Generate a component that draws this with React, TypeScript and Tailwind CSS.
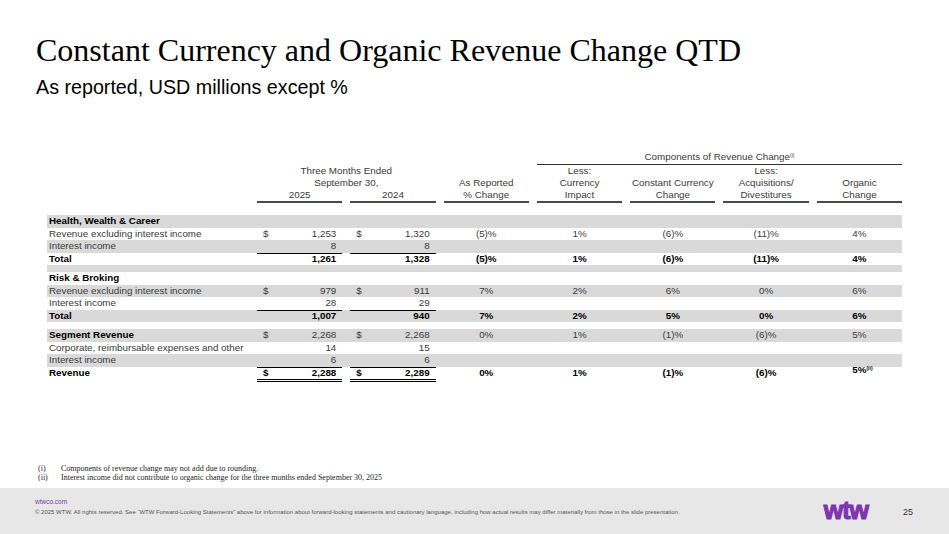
import React from 'react'

const sans = "font-['Liberation_Sans',Arial,sans-serif]"
const serif = "font-['Liberation_Serif','Times_New_Roman',serif]"

type Row = {
  label: string
  labelBold?: boolean
  valBold?: boolean
  a?: string
  b?: string
  dollar?: boolean
  pct?: string[]
  shade: boolean
  underline?: boolean
  double?: boolean
}

const rows: (Row | { spacer: true; shade: boolean })[] = [
  { label: 'Health, Wealth & Career', labelBold: true, shade: true },
  { label: 'Revenue excluding interest income', a: '1,253', b: '1,320', dollar: true, pct: ['(5)%', '1%', '(6)%', '(11)%', '4%'], shade: false },
  { label: 'Interest income', a: '8', b: '8', shade: true, underline: true },
  { label: 'Total', labelBold: true, valBold: true, a: '1,261', b: '1,328', pct: ['(5)%', '1%', '(6)%', '(11)%', '4%'], shade: false },
  { spacer: true, shade: true },
  { label: 'Risk & Broking', labelBold: true, shade: false },
  { label: 'Revenue excluding interest income', a: '979', b: '911', dollar: true, pct: ['7%', '2%', '6%', '0%', '6%'], shade: true },
  { label: 'Interest income', a: '28', b: '29', shade: false, underline: true },
  { label: 'Total', labelBold: true, valBold: true, a: '1,007', b: '940', pct: ['7%', '2%', '5%', '0%', '6%'], shade: true },
  { spacer: true, shade: false },
  { label: 'Segment Revenue', labelBold: true, a: '2,268', b: '2,268', dollar: true, pct: ['0%', '1%', '(1)%', '(6)%', '5%'], shade: true },
  { label: 'Corporate, reimbursable expenses and other', a: '14', b: '15', shade: false },
  { label: 'Interest income', a: '6', b: '6', shade: true, underline: true },
  { label: 'Revenue', labelBold: true, valBold: true, a: '2,288', b: '2,289', dollar: true, pct: ['0%', '1%', '(1)%', '(6)%', '5%'], shade: false, double: true },
]

const grid = 'grid grid-cols-[202px_repeat(7,85.3px)] gap-x-2'

function Money({ v, dollar, bold, underline, double }: { v?: string; dollar?: boolean; bold?: boolean; underline?: boolean; double?: boolean }) {
  return (
    <div
      className={`flex items-center justify-between px-[6px] h-full
        ${bold ? 'font-bold text-black' : 'text-[#3a3a3a]'}
        ${underline ? 'border-b border-black' : ''}
        ${double ? 'border-b-[3px] border-double border-black' : ''}`}
    >
      <span>{dollar ? '$' : ''}</span>
      <span>{v}</span>
    </div>
  )
}

function DataRow({ r }: { r: Row }) {
  const last = r.double
  return (
    <div className={`${grid} h-[12.6px] leading-[12.6px] ${r.shade ? 'bg-[#d9d9d9]' : ''}`}>
      <div className={`pl-[2px] whitespace-nowrap ${r.labelBold ? 'font-bold text-black' : 'text-[#3a3a3a]'}`}>{r.label}</div>
      <Money v={r.a} dollar={r.dollar} bold={r.valBold} underline={r.underline} double={r.double} />
      <Money v={r.b} dollar={r.dollar} bold={r.valBold} underline={r.underline} double={r.double} />
      {(r.pct ?? ['', '', '', '', '']).map((p, i) => (
        <div key={i} className={`text-center ${r.valBold ? 'font-bold text-black' : 'text-[#3a3a3a]'}`}>
          {last && i === 4 ? (
            <span className="relative -top-[3px] left-[3px]">
              {p}
              <span className="relative -top-[3px] text-[5px] font-bold">(ii)</span>
            </span>
          ) : (
            p
          )}
        </div>
      ))}
    </div>
  )
}

function Header() {
  const u = 'border-b-2 border-[#4a4a4a]'
  return (
    <div className="text-[#3a3a3a] leading-[12px]">
      <div className={`${grid} h-[13px]`}>
        <div className="col-start-5 col-span-4 text-center border-b border-[#333]">
          Components of Revenue Change<span className="relative -top-[3px] text-[5px]">(i)</span>
        </div>
      </div>
      <div className={`${grid} h-[12px] mt-[1px]`}>
        <div className="col-start-2 col-span-2 text-center">Three Months Ended</div>
        <div className="col-start-5 text-center">Less:</div>
        <div className="col-start-7 text-center">Less:</div>
      </div>
      <div className={`${grid} h-[12px]`}>
        <div className="col-start-2 col-span-2 text-center">September 30,</div>
        <div className="text-center">As Reported</div>
        <div className="text-center">Currency</div>
        <div className="text-center whitespace-nowrap">Constant Currency</div>
        <div className="text-center">Acquisitions/</div>
        <div className="text-center">Organic</div>
      </div>
      <div className={`${grid} h-[14px]`}>
        <div className={`col-start-2 text-center ${u}`}>2025</div>
        <div className={`text-center ${u}`}>2024</div>
        <div className={`text-center ${u}`}>% Change</div>
        <div className={`text-center ${u}`}>Impact</div>
        <div className={`text-center ${u}`}>Change</div>
        <div className={`text-center ${u}`}>Divestitures</div>
        <div className={`text-center ${u}`}>Change</div>
      </div>
    </div>
  )
}

export default function App() {
  return (
    <div className={`w-[949px] h-[534px] bg-white flex flex-col overflow-hidden ${sans}`}>
      {/* title */}
      <h1 className={`${serif} text-[32px] leading-[32px] text-black pl-[36px] mt-[34px]`}>
        Constant Currency and Organic Revenue Change QTD
      </h1>
      <p className="text-[19.7px] leading-[20px] text-black pl-[36px] mt-[11px]">As reported, USD millions except %</p>

      {/* table */}
      <div className="ml-[47px] w-[855px] mt-[54px] text-[9.8px]">
        <Header />
        <div className="mt-[12px]">
          {rows.map((r, i) =>
            'spacer' in r ? (
              <div key={i} className={`h-[6.6px] ${r.shade ? 'bg-[#d9d9d9]' : ''}`} />
            ) : (
              <DataRow key={i} r={r} />
            )
          )}
        </div>
      </div>

      {/* footnotes */}
      <div className={`${serif} text-[8px] leading-[8.3px] text-[#222] mt-[86px] pl-[38px]`}>
        <div className="flex"><span className="w-[23px]">(i)</span><span>Components of revenue change may not add due to rounding.</span></div>
        <div className="flex"><span className="w-[23px]">(ii)</span><span>Interest income did not contribute to organic change for the three months ended September 30, 2025</span></div>
      </div>

      {/* footer */}
      <footer className="mt-auto h-[46px] bg-[#e7e7e7] flex items-start">
        <div className="pl-[35px] pt-[10px]">
          <div className="text-[6.5px] leading-[8px] text-[#7f35b2]">wtwco.com</div>
          <div className="text-[6px] leading-[8px] text-[#555] mt-[2px] whitespace-nowrap">
            © 2025 WTW. All rights reserved. See “WTW Forward-Looking Statements” above for information about forward-looking statements and cautionary language, including how actual results may differ materially from those in the slide presentation.
          </div>
        </div>
        <span className="ml-auto mt-[13px] text-[25px] leading-[18px] font-bold text-[#7f35b2] tracking-[-1px] [-webkit-text-stroke:1.2px_#7f35b2]">
          wtw
        </span>
        <span className="ml-[35px] mr-[36px] mt-[19px] text-[9px] leading-[10px] text-[#333]">25</span>
      </footer>
    </div>
  )
}
